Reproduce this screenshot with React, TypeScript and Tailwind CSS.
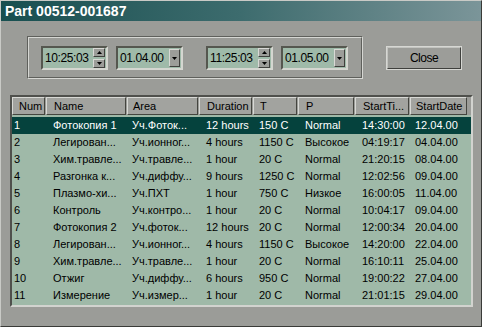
import React from 'react';

const rows = [
  ['1', 'Фотокопия 1', 'Уч.Фоток...', '12 hours', '150 C', 'Normal', '14:30:00', '12.04.00'],
  ['2', 'Легирован...', 'Уч.ионног...', '4 hours', '1150 C', 'Высокое', '04:19:17', '04.04.00'],
  ['3', 'Хим.травле...', 'Уч.травле...', '1 hour', '20 C', 'Normal', '21:20:15', '08.04.00'],
  ['4', 'Разгонка к...', 'Уч.диффу...', '9 hours', '1250 C', 'Normal', '12:02:56', '09.04.00'],
  ['5', 'Плазмо-хи...', 'Уч.ПХТ', '1 hour', '750 C', 'Низкое', '16:00:05', '11.04.00'],
  ['6', 'Контроль', 'Уч.контро...', '1 hour', '20 C', 'Normal', '10:04:17', '09.04.00'],
  ['7', 'Фотокопия 2', 'Уч.фоток...', '12 hours', '20 C', 'Normal', '12:00:34', '20.04.00'],
  ['8', 'Легирован...', 'Уч.ионног...', '4 hours', '1150 C', 'Высокое', '14:20:00', '22.04.00'],
  ['9', 'Хим.травле...', 'Уч.травле...', '1 hour', '20 C', 'Normal', '16:10:11', '25.04.00'],
  ['10', 'Отжиг', 'Уч.диффу...', '6 hours', '950 C', 'Normal', '19:00:22', '27.04.00'],
  ['11', 'Измерение', 'Уч.измер...', '1 hour', '20 C', 'Normal', '21:01:15', '29.04.00'],
];

const headers = ['Num', 'Name', 'Area', 'Duration', 'T', 'P', 'StartTi...', 'StartDate'];
const cellPad = ['pl-[2px]', 'pl-[7px]', 'pl-[5px]', 'pl-[7px]', 'pl-[6px]', 'pl-[7px]', 'pl-[7px]', 'pl-[5px]'];
const grid = 'grid grid-cols-[34px_81px_72px_54px_45px_57px_55px_58px]';

function Arrow({ up }: { up?: boolean }) {
  return (
    <svg width="5" height="3" viewBox="0 0 5 3">
      <path d={up ? 'M2.5 0 L5 3 L0 3 Z' : 'M0 0 L5 0 L2.5 3 Z'} fill="#000" />
    </svg>
  );
}

function SmallButton({ children, className }: { children: React.ReactNode; className: string }) {
  return (
    <div className={`flex items-center justify-center bg-[#9c9d99] border border-t-[#d8d9d5] border-l-[#d8d9d5] border-b-[#3f403d] border-r-[#3f403d] ${className}`}>
      {children}
    </div>
  );
}

function TimeField({ value }: { value: string }) {
  return (
    <div className="flex w-[67px] h-[24px] border-2 border-t-[#55574f] border-l-[#55574f] border-b-[#d4d6d0] border-r-[#d4d6d0] bg-[#9fbaa9]">
      <div className="flex-1 pl-[2px] flex items-center text-[12px] tracking-[-0.4px] text-black">{value}</div>
      <div className="flex flex-col justify-center gap-[2px] pr-[1px]">
        <SmallButton className="w-[12px] h-[9px]"><Arrow up /></SmallButton>
        <SmallButton className="w-[12px] h-[9px]"><Arrow /></SmallButton>
      </div>
    </div>
  );
}

function DateField({ value }: { value: string }) {
  return (
    <div className="flex w-[67px] h-[24px] border-2 border-t-[#55574f] border-l-[#55574f] border-b-[#d4d6d0] border-r-[#d4d6d0] bg-[#9fbaa9]">
      <div className="flex-1 pl-[2px] flex items-center text-[12px] tracking-[-0.4px] text-black">{value}</div>
      <div className="flex items-center pr-[1px]">
        <SmallButton className="w-[11px] h-[18px]"><Arrow /></SmallButton>
      </div>
    </div>
  );
}

export default function App() {
  return (
    <div className="w-[482px] h-[327px] bg-[#9b9c98] font-['Liberation_Sans',Arial,sans-serif] border border-t-[#c9cac6] border-l-[#c9cac6] border-b-[#3a3b38] border-r-[#3a3b38] flex flex-col overflow-hidden">
      {/* Title bar */}
      <div className="h-[20px] shrink-0 bg-gradient-to-r from-[#174f50] via-[#3d6c6e] to-[#7b9599] flex items-center pl-[4px]">
        <span className="text-white font-bold text-[14px] leading-none">Part 00512-001687</span>
      </div>

      {/* Controls */}
      <div className="flex items-start mt-[15px] ml-[26px]">
        <div className="w-[336px] h-[43px] border border-t-[#5f605c] border-l-[#5f605c] border-b-[#d6d7d3] border-r-[#d6d7d3]">
          <div className="w-full h-full border border-t-[#d6d7d3] border-l-[#d6d7d3] border-b-[#5f605c] border-r-[#5f605c] flex items-start pt-[8px] pl-[12px]">
            <TimeField value="10:25:03" />
            <div className="ml-[8px]"><DateField value="01.04.00" /></div>
            <div className="ml-[23px]"><TimeField value="11:25:03" /></div>
            <div className="ml-[8px]"><DateField value="01.05.00" /></div>
          </div>
        </div>
        <div className="ml-[23px] mt-[10px] w-[76px] h-[24px] border border-[#d6d7d3]">
          <div className="w-full h-full border border-t-[#c2c3bf] border-l-[#c2c3bf] border-b-[#3f403d] border-r-[#3f403d] bg-[#9c9d99] flex items-center justify-center text-[12px] tracking-[-0.5px] text-black">
            Close
          </div>
        </div>
      </div>

      {/* Table */}
      <div className="ml-[9px] mt-[16px] w-[463px] h-[212px] border-2 border-t-[#4f504c] border-l-[#4f504c] border-b-[#d2d3cf] border-r-[#d2d3cf] bg-[#9fb9a8] text-[11px] text-black">
        <div className={`${grid} h-[18px] bg-[#9b9c98]`}>
          {headers.map((h, i) => (
            <div
              key={h}
              className={`mr-[1px] flex items-center border border-t-[#d8d9d5] border-l-[#d8d9d5] border-b-[#44453f] border-r-[#44453f] bg-[#a2a39f] whitespace-nowrap overflow-hidden ${i === 0 ? 'pl-[6px]' : cellPad[i]}`}
            >
              {h}
            </div>
          ))}
        </div>
        <div className="mt-[2px] flex flex-col">
          {rows.map((r, ri) => (
            <div key={r[0]} className={`${grid} h-[17px] items-center ${ri === 0 ? 'bg-[#05423d] text-white' : ''}`}>
              {r.map((c, ci) => (
                <div key={ci} className={`whitespace-nowrap overflow-hidden ${cellPad[ci]}`}>{c}</div>
              ))}
            </div>
          ))}
        </div>
      </div>
    </div>
  );
}
